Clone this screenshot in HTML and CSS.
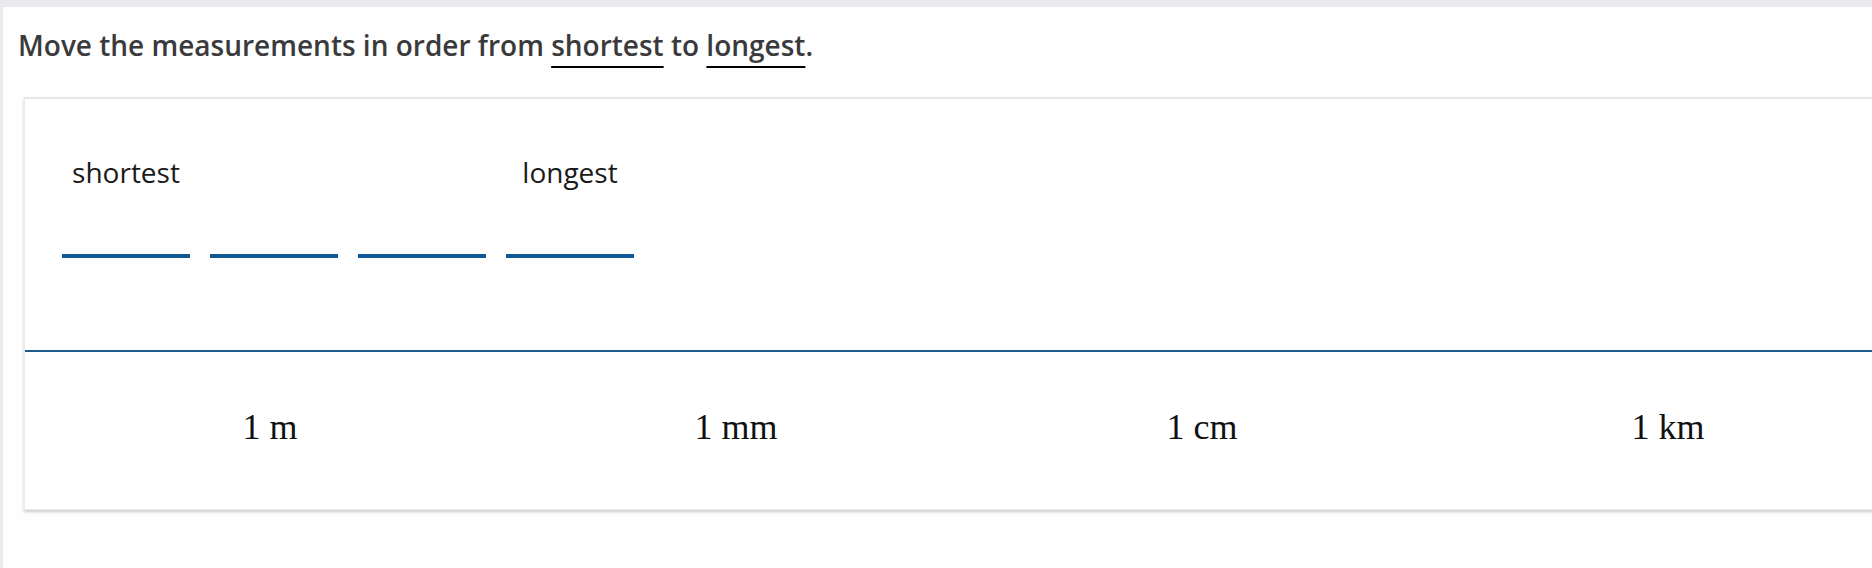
FILE: index.html
```html
<!DOCTYPE html>
<html lang="en">
<head>
<meta charset="utf-8">
<title>Order measurements</title>
<link rel="stylesheet" href="styles.css">
</head>
<body>
<main class="page">
  <p class="prompt">Move the measurements in order from <span class="u">shortest</span> to <span class="u">longest</span>.</p>
  <section class="card">
    <div class="slots">
      <div class="slot"><div class="label">shortest</div><div class="blank"></div></div>
      <div class="slot"><div class="label"></div><div class="blank"></div></div>
      <div class="slot"><div class="label"></div><div class="blank"></div></div>
      <div class="slot"><div class="label">longest</div><div class="blank"></div></div>
    </div>
    <div class="divider"></div>
    <div class="tiles">
      <div class="tile">1 m</div>
      <div class="tile">1 mm</div>
      <div class="tile">1 cm</div>
      <div class="tile">1 km</div>
    </div>
  </section>
</main>
</body>
</html>
```
FILE: styles.css
```css
html, body {
  margin: 0;
  padding: 0;
}
body {
  background: #fefefe;
  border-top: 7px solid #e9e9ee;
  overflow: hidden;
  width: 1872px;
  height: 561px;
}
.page {
  border-left: 3px solid #ebebf0;
  padding-left: 15px;
  height: 561px;
  box-sizing: border-box;
  padding-top: 19px;
}
.prompt {
  margin: 0;
  font-family: "Open Sans", "Liberation Sans", sans-serif;
  font-weight: 600;
  font-size: 28px;
  line-height: 38px;
  color: #3a3a3c;
  white-space: nowrap;
}
.u {
  text-decoration: underline;
  text-decoration-color: #000;
  text-decoration-thickness: 2px;
  text-underline-offset: 10px;
}
.card {
  margin-top: 33px;
  margin-left: 6px;
  width: 1890px;
  box-sizing: border-box;
  background: #fff;
  border: 1px solid #ececec;
  border-top: 2px solid #e6e6e6;
  box-shadow: 0 2px 3px rgba(0, 0, 0, 0.2);
}
.slots {
  display: flex;
  gap: 20px;
  padding: 54px 0 0 37px;
}
.slot {
  width: 128px;
  display: flex;
  flex-direction: column;
  align-items: center;
}
.label {
  height: 38px;
  font-family: "Open Sans", "Liberation Sans", sans-serif;
  font-size: 28px;
  line-height: 38px;
  color: #1a1a1a;
  white-space: nowrap;
}
.blank {
  margin-top: 63px;
  width: 128px;
  height: 4px;
  background: #0f5a97;
}
.divider {
  margin-top: 92px;
  height: 2px;
  background: #1b5b8d;
}
.tiles {
  display: grid;
  grid-template-columns: repeat(4, 466px);
  padding: 55px 12px 62px 12px;
}
.tile {
  text-align: center;
  font-family: "Liberation Serif", "Times New Roman", serif;
  font-size: 36px;
  line-height: 40px;
  color: #111;
}
```
